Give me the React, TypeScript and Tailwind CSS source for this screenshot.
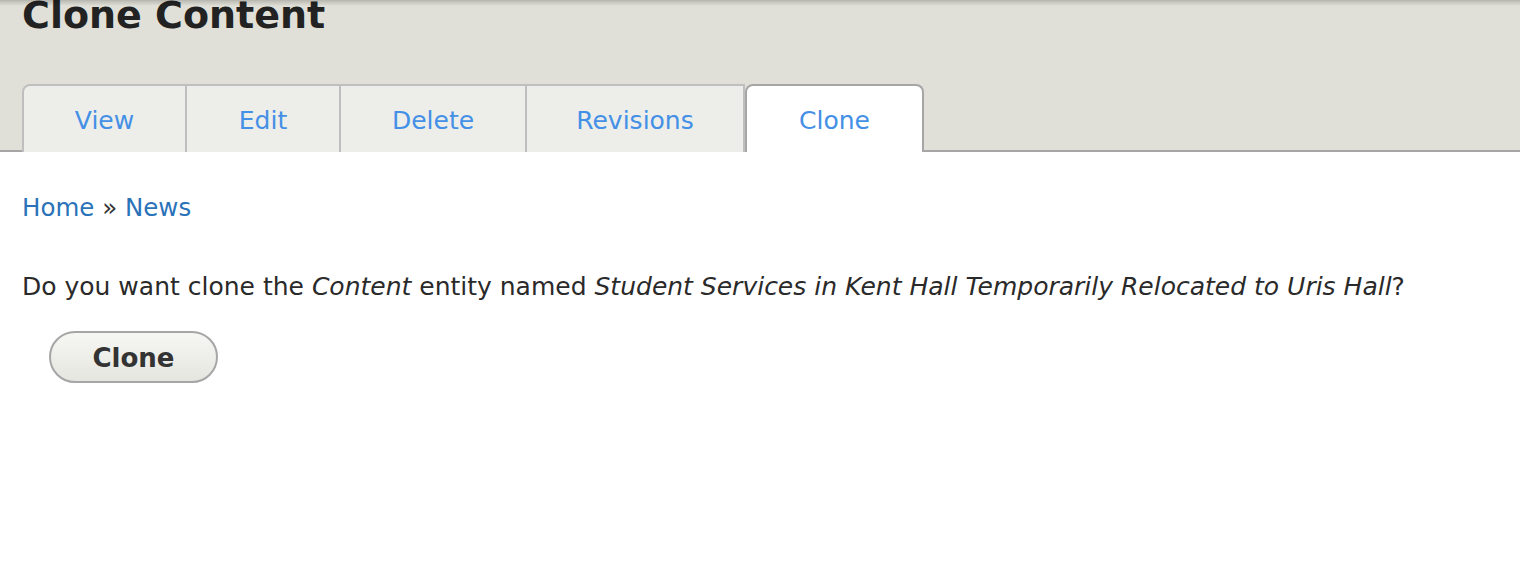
import React from "react";

const tabs = [
  { label: "View", w: "w-[165px]" },
  { label: "Edit", w: "w-[154px]" },
  { label: "Delete", w: "w-[186px]" },
  { label: "Revisions", w: "w-[218px]" },
];

export default function App() {
  return (
    <div className="min-h-[584px] bg-white font-['DejaVu_Sans',sans-serif] text-[#333]">
      {/* Header band */}
      <div className="relative border-b-2 border-[#a6a6a6] bg-[#e0e0d8] pl-[22px]">
        <div className="pointer-events-none absolute inset-x-0 top-0 h-[10px] bg-gradient-to-b from-black/40 via-black/15 to-transparent" />
        <h1 className="-mt-[4px] text-[38px] font-bold leading-[38px] text-[#222]">Clone Content</h1>
        <ul className="-mb-[2px] mt-[50px] flex">
          {tabs.map((t, i) => (
            <li
              key={t.label}
              className={`${t.w} h-[68px] border-r-2 border-t-2 border-[#bfbfbf] bg-[#ededea] pt-[22px] text-center text-[25px] leading-[25px] text-[#4390e6] ${
                i === 0 ? "rounded-tl-[8px] border-l-2" : ""
              }`}
            >
              {t.label}
            </li>
          ))}
          <li className="h-[68px] w-[179px] rounded-t-[8px] border-2 border-b-0 border-[#a6a6a6] bg-white pt-[22px] text-center text-[25px] leading-[25px] text-[#4390e6]">
            Clone
          </li>
        </ul>
      </div>

      {/* Content */}
      <div className="pl-[22px] pt-[44px]">
        <nav className="text-[24.5px] leading-[24.5px]">
          <a className="text-[#2b73b9]">Home</a>
          <span className="text-[#333]"> » </span>
          <a className="text-[#2b73b9]">News</a>
        </nav>
        <p className="mt-[53px] text-[25px] leading-[25px] text-[#2a2a2a]">
          Do you want clone the <em>Content</em> entity named{" "}
          <em>Student Services in Kent Hall Temporarily Relocated to Uris Hall</em>?
        </p>
        <button className="ml-[27px] mt-[32px] h-[52px] w-[169px] rounded-full border-2 border-[#a6a6a6] bg-gradient-to-b from-[#f6f6f3] to-[#e6e6e0] pt-[2px] text-[26px] font-bold leading-[26px] text-[#333]">
          Clone
        </button>
      </div>
    </div>
  );
}
